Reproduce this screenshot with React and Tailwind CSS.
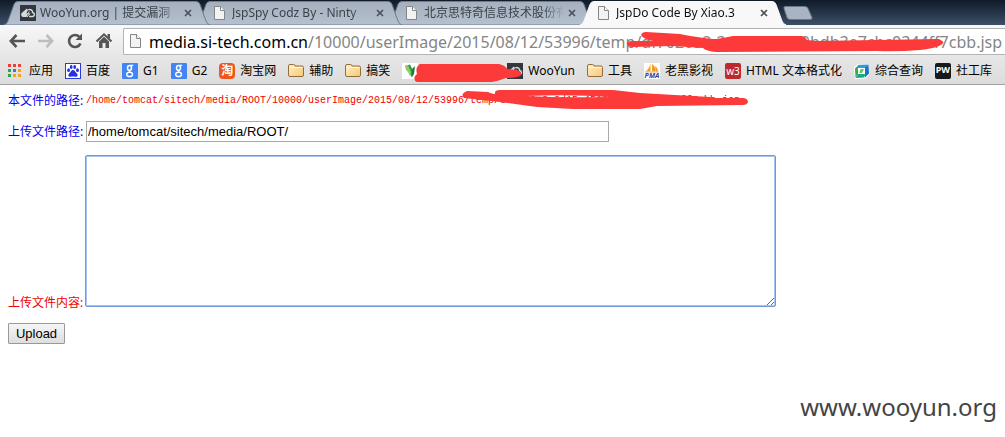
import React from "react";

const tabs = [
  { title: "WooYun.org | 提交漏洞", cloud: true },
  { title: "JspSpy Codz By - Ninty" },
  { title: "北京思特奇信息技术股份有" },
  { title: "JspDo Code By Xiao.3", active: true },
];

function CloudIcon() {
  return (
    <svg viewBox="0 0 16 16" className="size-4 shrink-0" aria-hidden="true">
      <rect width="16" height="16" fill="#33373d" />
      <path d="M6.500 12H3A2.500 2.500 0 0 1 2.600 7.300L6.800 3.500 8 5 6.300 8.600 8.500 8z" fill="#d5dade" />
      <path d="M8.300 4.800a2.900 2.900 0 0 1 4.300 2.800 2 2 0 0 1 .4 3.900H9" fill="none" stroke="#d5dade" strokeWidth="1.500" />
      <path d="M9.200 6.500L8 9l1.800-.3L7 12" fill="none" stroke="#d5dade" />
    </svg>
  );
}

function PageIcon() {
  return (
    <svg viewBox="0 0 16 16" className="size-4 shrink-0" aria-hidden="true">
      <path d="M2.500 1.500h6l4 4v9h-10z" fill="#f3f3f3" stroke="#858585" />
      <path d="M8.500 1.500v4h4" fill="#fff" stroke="#858585" />
    </svg>
  );
}

function FolderIcon() {
  return (
    <svg viewBox="0 0 16 16" className="size-4 shrink-0" aria-hidden="true">
      <defs>
        <linearGradient id="folder" x1="0" y1="0" x2="1" y2="1">
          <stop offset="0" stopColor="#fff0c4" />
          <stop offset="1" stopColor="#f5c878" />
        </linearGradient>
      </defs>
      <path d="M.5 3q0-1.500 1.500-1.500h3.500q1.500 0 1.500 1.500h7q1.500 0 1.500 1.500v7.500q0 1.500-1.500 1.500H2Q.5 13.500.5 12z" fill="url(#folder)" stroke="#936c3c" />
      <path d="M1.500 4.500h13" stroke="#fff6dc" />
    </svg>
  );
}

function AppsIcon() {
  const colors = ["#e8413c", "#e8413c", "#e8413c", "#2fa152", "#3c78d8", "#f1a51c", "#2fa152", "#f1a51c", "#f1a51c"];
  return (
    <svg viewBox="0 0 16 16" className="size-4 shrink-0" aria-hidden="true">
      {colors.map((c, i) => (
        <rect key={i} x={(i % 3) * 5} y={1 + Math.floor(i / 3) * 5} width="3" height="3" fill={c} />
      ))}
    </svg>
  );
}

function BaiduIcon() {
  return (
    <svg viewBox="0 0 16 16" className="size-4 shrink-0" aria-hidden="true">
      <rect x=".5" y=".5" width="15" height="15" fill="#fff" stroke="#3139d4" />
      <g fill="#2831df">
        <ellipse cx="3.600" cy="7.200" rx="1.400" ry="1.900" />
        <ellipse cx="6.200" cy="4" rx="1.400" ry="2" />
        <ellipse cx="9.700" cy="4" rx="1.400" ry="2" />
        <ellipse cx="12.500" cy="7.200" rx="1.400" ry="1.900" />
        <path d="M8 7c1.800 0 2.200 2 3.600 3.200 2 1.800.8 3.800-1.200 3.600-1.600-.3-3.200-.3-4.800 0-2 .2-3.200-1.800-1.200-3.600C5.800 9 6.200 7 8 7z" />
      </g>
    </svg>
  );
}

function GoogleIcon() {
  return (
    <svg viewBox="0 0 16 16" className="size-4 shrink-0" aria-hidden="true">
      <rect width="16" height="16" rx="1" fill="#4384f3" />
      <g fill="none" stroke="#fff">
        <ellipse cx="7.500" cy="4.900" rx="2" ry="2.400" strokeWidth="1.500" />
        <path d="M8 2.400h3.200M8.600 7c-2 1-1.400 1.700 0 2.300" strokeWidth="1.200" />
        <ellipse cx="7.600" cy="11.400" rx="2.900" ry="2.100" strokeWidth="1.400" />
      </g>
    </svg>
  );
}

function TaobaoIcon() {
  return (
    <span className="flex size-4 shrink-0 items-center justify-center rounded-sm bg-[#f0561e] text-xs leading-none font-bold text-white" aria-hidden="true">
      淘
    </span>
  );
}

function LeafIcon() {
  return (
    <svg viewBox="0 0 16 16" className="size-4 shrink-0" aria-hidden="true">
      <rect width="16" height="16" fill="#fff" />
      <path d="M3 3l5-1.500 3 6-1 7z" fill="#2d9a45" />
      <path d="M3 3l3-1 3 7-1 5q-1-5-4-7z" fill="#8bcf64" />
      <path d="M10 6l3-3-1 8-2 3z" fill="#197c38" />
    </svg>
  );
}

function PmaIcon() {
  return (
    <span className="flex size-4 shrink-0 flex-col items-center justify-end bg-white" aria-hidden="true">
      <svg viewBox="0 0 16 10" className="h-2.5 w-4 shrink-0">
        <path d="M6.500.5v8H1.500q4-3 5-8zM8 1q4 3 3.500 7.500H8zM11 3q3 2 3 5.500h-2z" fill="#f59c1a" />
        <path d="M1 9h14" stroke="#b9b9b9" />
      </svg>
      <span className="text-[7px] leading-[6px] font-bold text-[#3d4085] italic">PMA</span>
    </span>
  );
}

function W3Icon() {
  return (
    <span className="flex size-4 shrink-0 items-center justify-center rounded-xs bg-[#bd2a2e] text-[10px] leading-none text-white" aria-hidden="true">
      w3
    </span>
  );
}

function QueryIcon() {
  return (
    <svg viewBox="0 0 16 16" className="size-4 shrink-0" aria-hidden="true">
      <path d="M3 1.500L15 1l.5 10-4 4.500L1 16 0 5z" fill="#fff" />
      <path d="M4 2l10.500-.5L11.500 5H4z" fill="#2b9fdb" />
      <path d="M14.500 1.500l.5 9-4 4V5z" fill="#1b73c4" />
      <path d="M4 2.500V11l-2.500 3.500L1 5.500z" fill="#39a94a" />
      <path d="M4 11h7l-.5 3.500-9 .5z" fill="#19a884" />
      <path d="M6.500 6H10l-2 4H5.500z" fill="#6cc35a" />
    </svg>
  );
}

function PwIcon() {
  return (
    <span className="flex size-4 shrink-0 justify-center rounded-xs bg-[#17191b] pt-0.5 text-[9px] leading-[9px] font-bold text-white" aria-hidden="true">
      PW
    </span>
  );
}

const bookmarks = [
  { label: "应用", Icon: AppsIcon },
  { label: "百度", Icon: BaiduIcon },
  { label: "G1", Icon: GoogleIcon },
  { label: "G2", Icon: GoogleIcon },
  { label: "淘宝网", Icon: TaobaoIcon },
  { label: "辅助", Icon: FolderIcon },
  { label: "搞笑", Icon: FolderIcon },
  { label: "", Icon: LeafIcon, hidden: true },
  { label: "WooYun", Icon: CloudIcon },
  { label: "工具", Icon: FolderIcon },
  { label: "老黑影视", Icon: PmaIcon },
  { label: "HTML 文本格式化", Icon: W3Icon },
  { label: "综合查询", Icon: QueryIcon },
  { label: "社工库", Icon: PwIcon },
];

function Tab({ title, cloud, active, order }) {
  return (
    <div className={"relative h-6 w-48 min-w-0 " + order}>
      <svg viewBox="0 0 206 24" preserveAspectRatio="none" className="absolute top-0 -left-1 h-6 w-[206px]" aria-hidden="true">
        <defs>
          <linearGradient id="inactive" x1="0" y1="0" x2="0" y2="1">
            <stop offset="0" stopColor="#a5afbd" />
            <stop offset="1" stopColor="#b5c1d0" />
          </linearGradient>
        </defs>
        <path
          d="M0 24q3-1 4-4L10 3.500Q11 .5 14 .5H192q3 0 4 3l6 16.500q1 3 4 4z"
          fill={active ? "#f8f8f8" : "url(#inactive)"}
          stroke={active ? "#f8f8f8" : "#717d8c"}
        />
      </svg>
      <div className="relative flex h-6 items-center pr-1 pl-3">
        {cloud ? <CloudIcon /> : <PageIcon />}
        <span
          className={
            "ml-1 min-w-0 flex-1 overflow-hidden mask-r-from-85% text-xs leading-6 whitespace-nowrap " +
            (active ? "text-[#111]" : "text-[#3c4149]")
          }
        >
          {title}
        </span>
        <button type="button" aria-label="关闭标签页" className="flex size-4 shrink-0 items-center justify-center">
          <svg viewBox="0 0 8 8" className="size-2" aria-hidden="true">
            <path d="M1 1l6 6M7 1L1 7" stroke="#4d5157" strokeWidth="1.700" />
          </svg>
        </button>
      </div>
    </div>
  );
}

export default function App() {
  return (
    <div className="flex min-h-screen flex-col overflow-hidden bg-white font-['Noto_Sans','Noto_Sans_CJK_SC',sans-serif]">
      <header>
        <div className="isolate flex h-[25px] bg-linear-to-b from-[#101b29] to-[#3c5068] pt-px pl-2">
          <Tab {...tabs[0]} order="z-30" />
          <Tab {...tabs[1]} order="z-20" />
          <Tab {...tabs[2]} order="z-10" />
          <Tab {...tabs[3]} order="z-40" />
          <button type="button" aria-label="新标签页" className="ml-1.5 flex h-6 shrink-0 items-center">
            <svg viewBox="0 0 32 16" className="h-4 w-8" aria-hidden="true">
              <path d="M3 1.500h20q2 0 3 2l4 9q.5 2-1.500 2H8q-2 0-3-2L2 3.500q-.5-2 1-2z" fill="#a9b3c1" stroke="#66768b" />
            </svg>
          </button>
        </div>

        <div className="flex h-8 items-center overflow-hidden bg-linear-to-b from-[#f8f8f8] to-[#e6e6e6] pl-2 text-[#555]">
          <nav className="flex shrink-0 items-center gap-[11px]">
            <button type="button" aria-label="后退">
              <svg viewBox="0 0 18 18" className="size-[18px]" fill="none" stroke="#555" strokeWidth="2.600" aria-hidden="true">
                <path d="M8.500 3L2.800 9l5.700 6M3 9h14" />
              </svg>
            </button>
            <button type="button" aria-label="前进">
              <svg viewBox="0 0 18 18" className="size-[18px]" fill="none" stroke="#bebebe" strokeWidth="2.600" aria-hidden="true">
                <path d="M9.500 3l5.700 6-5.700 6M15 9H1" />
              </svg>
            </button>
            <button type="button" aria-label="重新加载">
              <svg viewBox="0 0 18 18" className="size-[18px]" aria-hidden="true">
                <path d="M13.500 5A6 6 0 1 0 14.500 11.500" fill="none" stroke="#555" strokeWidth="2.600" />
                <path d="M16 1.500V8H9.500z" fill="#555" />
              </svg>
            </button>
            <button type="button" aria-label="主页">
              <svg viewBox="0 0 18 18" className="size-[18px]" aria-hidden="true">
                <path d="M1.500 9.500L9 2.300l7.500 7.200" fill="none" stroke="#555" strokeWidth="2" />
                <path d="M12.500 2H15v5l-2.500-2.500zM4 9.500l5-4.700 5 4.700V16h-3.500v-5h-3v5H4z" fill="#555" />
              </svg>
            </button>
          </nav>
          <div className="relative ml-2.5 flex h-[27px] flex-1 items-center rounded-l-xs border border-r-0 border-[#b3b3b3] bg-white pl-1">
            <PageIcon />
            <div role="textbox" aria-label="地址栏" tabIndex={0} className="ml-[5px] w-0 flex-1 overflow-hidden pt-0.5 text-base leading-6 whitespace-nowrap text-[#858585]">
              <span className="text-black">media.si-tech.com.cn</span>
              /10000/userImage/2015/08/12/53996/temp/df7620a2-3d15-4518-9bdb3e7cbc0344ff7cbb.jsp
            </div>
            <svg viewBox="0 0 318 22" className="absolute top-0.5 left-[502px] h-[22px] w-[318px]" aria-hidden="true">
              <path
                d="M20 1L54 3Q80 8 90 8 98 7 107 5L176 5Q180 6 181 9L190 10 312 8Q318 10 317 12 314 17 294 19 270 21 251 20L90 21Q80 20 77 17L47 15 6 16Q0 15 1 12 2 10 6 10L27 10Q17 8 15 4 16 1 20 1z"
                fill="#fc3a39"
              />
            </svg>
          </div>
        </div>

        <nav className="flex h-7 items-center gap-3 overflow-hidden border-b border-[#a2a2a2] bg-linear-to-b from-[#e6e6e6] to-[#dcdcdc] pl-2">
          {bookmarks.map(({ label, Icon, hidden }, i) => (
            <a key={i} href="#" aria-label={hidden ? "书签" : undefined} className="relative flex shrink-0 items-center gap-[5px] text-xs leading-5 whitespace-nowrap text-black">
              <Icon />
              {hidden ? (
                <>
                  <span className="w-[72px]" />
                  <svg viewBox="0 0 108 21" className="absolute top-0 left-3 z-10 h-[21px] w-[108px]" aria-hidden="true">
                    <path d="M6 1L85 1Q92 3 93 6L103 7Q108 9 107 12 105 15 92 15 84 18 78 19L3 19Q-1 17 1 13L3 11Q1 4 6 1z" fill="#fc3a39" />
                  </svg>
                </>
              ) : (
                <span>{label}</span>
              )}
            </a>
          ))}
        </nav>
      </header>

      <main className="flex flex-1 flex-col px-2 pt-2">
        <div className="relative flex h-4 items-center text-xs">
          <span className="w-[78px] shrink-0 text-[#0000f0]">本文件的路径:</span>
          <span className="font-['Liberation_Mono',monospace] text-[10px] whitespace-nowrap text-[#f00000]">
            /home/tomcat/sitech/media/ROOT/10000/userImage/2015/08/12/53996/temp/df7620a2-3d15-4518-9bdb-3e7cb4ff7cbb.jsp
          </span>
          <svg viewBox="0 0 288 22" className="absolute -top-1 left-[452px] h-[22px] w-[288px]" aria-hidden="true">
            <path
              d="M7 2L28 3Q33 5 35 5 34 1 40 1H153L180 4 250 8 254 9H284Q288 10 288 13 287 16 283 16L197 17 180 20H113L77 18 40 13 4 9Q0 5 7 2zM66 7Q110 5 150 8 100 9 66 7z"
              fill="#fc3a39"
              fillRule="evenodd"
            />
          </svg>
        </div>

        <form onSubmit={(e) => e.preventDefault()}>
          <div className="mt-3 flex items-center">
            <label htmlFor="path" className="w-[78px] shrink-0 text-xs text-[#0000f0]">上传文件路径:</label>
            <input
              id="path"
              type="text"
              defaultValue="/home/tomcat/sitech/media/ROOT/"
              className="h-[21px] w-[523px] border border-[#a9a9a9] bg-white px-px font-['Liberation_Sans',sans-serif] text-[13px] text-black outline-none"
            />
          </div>
          <div className="mt-[13px] flex items-end">
            <label htmlFor="content" className="w-[77px] shrink-0 text-xs leading-2 text-[#f00000]">上传文件内容:</label>
            <textarea
              id="content"
              className="block h-[152px] w-[691px] resize rounded-xs border border-[#7198d8] bg-white p-0.5 text-[13px] ring-1 ring-[#a6c4f4] outline-none ring-inset"
            />
          </div>
          <button
            type="submit"
            className="mt-4 block h-[21px] w-[57px] rounded-[1px] border border-[#999] bg-linear-to-b from-[#f6f6f6] to-[#dedede] font-['Liberation_Sans',sans-serif] text-[13px] leading-[19px] text-black"
          >
            Upload
          </button>
        </form>
        <footer className="mt-auto pb-2.5 text-right text-2xl leading-10 text-[#444]">www.wooyun.org</footer>
      </main>
    </div>
  );
}
